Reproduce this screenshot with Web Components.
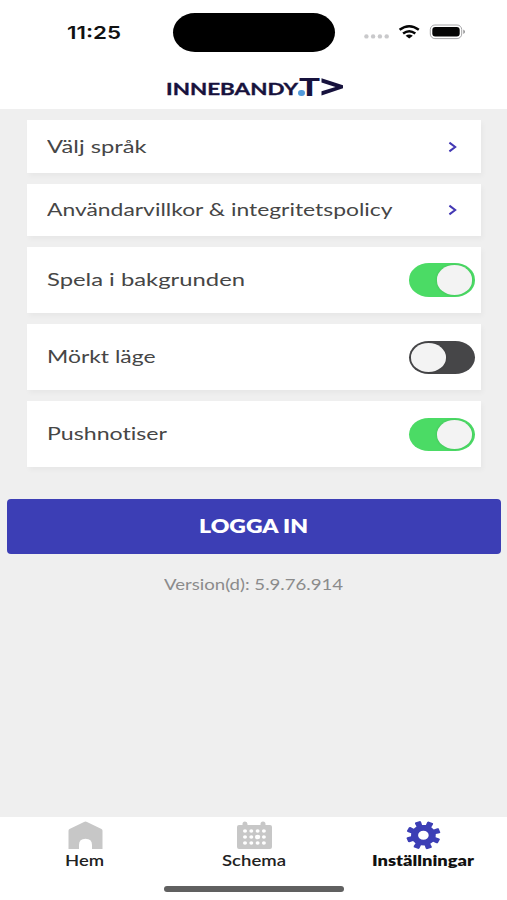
<!DOCTYPE html>
<html lang="sv">
<head>
<meta charset="utf-8">
<meta name="viewport" content="width=device-width">
<title>Inställningar</title>
<style>
html, body { margin: 0; height: 100%; background: #efefef; }
body { font-family: Lato, "Open Sans", sans-serif; font-variant-ligatures: none; }
</style>
</head>
<body>
<settings-app></settings-app>
<script>
const define = (name, html, setup) => customElements.define(name, class extends HTMLElement {
  connectedCallback() {
    if (this.shadowRoot) return;
    this.attachShadow({ mode: 'open' }).innerHTML = html;
    if (setup) setup(this, this.shadowRoot);
  }
});

/* A line of text whose glyphs are widened to fill the given width. */
define('wide-text', `<style>
  :host { display: block; flex: none; white-space: nowrap; line-height: 24px; height: 24px; }
  span { display: inline-block; transform-origin: 0 50%; }
</style><span></span>`, (host, root) => {
  const span = root.querySelector('span');
  const width = Number(host.getAttribute('width'));
  span.textContent = host.getAttribute('text');
  host.style.width = width + 'px';
  span.style.transform = `scaleX(${width / span.getBoundingClientRect().width})`;
});

define('status-bar', `<style>
  :host { display: grid; grid-template-columns: 173px 162px 1fr; height: 64px; align-items: center; box-sizing: border-box; }
  wide-text { font: 600 17.6px/24px Inter, sans-serif; color: #111; margin: 1.5px 0 0 66.5px; }
  .island { background: #000; height: 39px; border-radius: 22px / 19.5px; }
  svg { display: block; }
</style>
<wide-text text="11:25" width="54"></wide-text>
<div class="island"></div>
<svg width="172" height="64" viewBox="335 0 172 64">
  <g fill="#c9c9cb"><circle cx="366.4" cy="36.4" r="2.2"/><circle cx="373.1" cy="36.4" r="2.2"/><circle cx="379.9" cy="36.4" r="2.2"/><circle cx="386.7" cy="36.4" r="2.2"/></g>
  <g fill="none" stroke="#050505" stroke-width="2.5"><path d="M399.6 29.8Q409.2 22.6 418.8 29.8"/><path d="M403.1 33.6Q409.2 29 415.3 33.6"/></g>
  <path d="M405.6 35.8Q409.2 33.2 412.8 35.8L409.2 38.6Z" fill="#050505"/>
  <rect x="430.3" y="25" width="31.4" height="13.6" rx="4.6" fill="#fff" stroke="#a5a5a7"/>
  <rect x="432.3" y="27" width="27.4" height="9.6" rx="3" fill="#050505"/>
  <path d="M463.3 29.6Q465 30.3 465 31.8T463.3 34Z" fill="#909092"/>
</svg>`);

define('brand-logo', `<style>
  :host { display: flex; height: 45px; padding-left: 166px; align-items: flex-start; color: #17123d; }
  .name { font: 700 16.8px/24px Lato, sans-serif; -webkit-text-stroke: .35px; margin-top: 13px; }
  .t { font: 900 25.5px/30px Lato, sans-serif; height: 30px; margin: 7px 0 0 -6px; }
  .dot { width: 6.4px; height: 6px; border-radius: 50%; background: #529bdc; margin: 26px 0 0 .4px; }
  svg { margin: 13.5px 0 0 1px; }
</style>
<wide-text class="name" text="INNEBANDY" width="132"></wide-text>
<div class="dot"></div>
<wide-text class="t" text="T" width="21"></wide-text>
<svg width="24" height="18" viewBox="0 0 24 18"><path d="M.5 .3L22 7.2V10.3L.5 17.4V13.3L14.5 8.9 .5 4.4Z" fill="#17123d"/></svg>`);

define('settings-row', `<style>
  :host { display: flex; box-sizing: border-box; height: 52.5px; padding: 0 6.5px 0 20px; align-items: center; justify-content: space-between; background: #fff; color: #464646; font-size: 18px; box-shadow: 2px 3px 5px rgba(0,0,0,.035); }
  :host([tall]) { height: 66.3px; }
  wide-text { margin-bottom: 2px; }
</style><wide-text></wide-text><slot></slot>`, (host, root) => {
  const old = root.querySelector('wide-text'), t = document.createElement('wide-text');
  t.setAttribute('text', host.getAttribute('label'));
  t.setAttribute('width', host.getAttribute('label-width'));
  old.replaceWith(t);
});

define('chevron-icon', `<style>:host { display: block; margin-right: 17px; height: 12px; } svg { display: block; }</style>
<svg width="10" height="12" viewBox="0 0 10 12"><path d="M1.4 1.6L7.2 6 1.4 10.4" fill="none" stroke="#4338b4" stroke-width="2"/></svg>`);

define('toggle-switch', `<style>
  :host { display: flex; box-sizing: border-box; width: 66px; height: 33.4px; padding: 2px 2.5px 2px 2px; border-radius: 20px / 16.7px; background: #464648; }
  :host([on]) { background: #4bdb65; justify-content: flex-end; }
  i { width: 35.6px; height: 29.2px; border-radius: 50%; background: #f3f3f3; box-shadow: 0 0 3px rgba(0,0,0,.14); }
</style><i></i>`);

define('login-button', `<style>
  :host { display: flex; margin: 32px 6.5px 0 7.3px; height: 54.8px; border-radius: 4px; background: #3c3eb5; color: #fff; font-size: 18px; font-weight: 800; align-items: center; justify-content: center; box-sizing: border-box; padding-bottom: 1px; }
</style><slot></slot>`);

define('tab-item', `<style>
  :host { display: flex; flex-direction: column; align-items: center; font-size: 14.3px; color: #222; font-weight: 600; }
  :host([active]) { color: #111; font-weight: 800; }
  wide-text { margin-top: -2px; }
</style><slot></slot><wide-text></wide-text>`, (host, root) => {
  const old = root.querySelector('wide-text'), t = document.createElement('wide-text');
  t.setAttribute('text', host.getAttribute('label'));
  t.setAttribute('width', host.getAttribute('label-width'));
  old.replaceWith(t);
});

define('tab-bar', `<style>
  :host { display: flex; flex-direction: column; align-items: center; justify-content: space-between; height: 83px; box-sizing: border-box; padding: 3px 0 8.5px; background: #fff; }
  nav { display: grid; grid-template-columns: repeat(3, 1fr); width: 507px; }
  svg { display: block; }
  .home { width: 180px; height: 5.4px; border-radius: 3px; background: #606060; }
</style>
<nav>
  <tab-item label="Hem" label-width="39"><svg width="36" height="31" viewBox="0 0 36 31"><path d="M18.5 1.5Q19.2 1.5 20 2L34.5 9Q35.5 9.6 35.5 10.8V29H25V25Q25 18.8 18.5 18.8T12 25V29H1.5V10.8Q1.5 9.6 2.5 9L17 2Q17.8 1.5 18.5 1.5Z" fill="#c7c7c7"/></svg></tab-item>
  <tab-item label="Schema" label-width="64"><svg width="36" height="31" viewBox="0 0 36 31"><path d="M6.5 5V4A2.5 2.5 0 0 1 11.5 4V5H24.5V4A2.5 2.5 0 0 1 29.5 4V5H34Q36 5 36 7V27Q36 29 34 29H3Q1 29 1 27V7Q1 5 3 5Z" fill="#c7c7c7"/><g fill="#fff" id="d"></g></svg></tab-item>
  <tab-item active label="Inställningar" label-width="102"><svg width="36" height="31" viewBox="0 0 36 31"><path id="gear" fill="#3c3eb5" fill-rule="evenodd"/></svg></tab-item>
</nav>
<div class="home"></div>`, (host, root) => {
  root.querySelector('#d').innerHTML = [11, 17, 23].flatMap(y => [9, 15.3, 21.6, 27.9].map(x =>
    `<ellipse cx="${x}" cy="${y}" rx="${x === 21.6 && y === 17 ? 2.6 : 2}" ry="${x === 21.6 && y === 17 ? 2.3 : 1.8}"/>`)).join('');
  const p = (a, r) => `${(18.4 + Math.cos(a) * r * 17.3).toFixed(2)} ${(15.2 + Math.sin(a) * r * 14.4).toFixed(2)}`;
  const pts = [];
  for (let i = 0; i < 8; i++) {
    const a = i * Math.PI / 4 + 0.44;
    pts.push(p(a - .24, .72), p(a - .2, .94), p(a - .15, 1), p(a + .15, 1), p(a + .2, .94), p(a + .24, .72));
  }
  root.querySelector('#gear').setAttribute('d', `M${pts.join('L')}ZM13.1 15.2a5.3 4.5 0 1 0 10.6 0a5.3 4.5 0 1 0 -10.6 0Z`);
});

define('settings-app', `<style>
  :host { display: flex; flex-direction: column; width: 507px; height: 900px; background: #efefef; overflow: hidden; }
  header { height: 109px; background: #fff; flex: none; }
  main { flex: 1; }
  .rows { display: grid; gap: 10.8px; padding: 11.4px 25.7px 0 26.7px; }
  .version { display: flex; justify-content: center; margin-top: 17.5px; color: #8b8b8b; font-size: 15.7px; }
</style>
<header><status-bar></status-bar><brand-logo></brand-logo></header>
<main>
  <div class="rows">
    <settings-row label="Välj språk" label-width="99.5"><chevron-icon></chevron-icon></settings-row>
    <settings-row label="Användarvillkor &amp; integritetspolicy" label-width="345.5"><chevron-icon></chevron-icon></settings-row>
    <settings-row tall label="Spela i bakgrunden" label-width="198"><toggle-switch on></toggle-switch></settings-row>
    <settings-row tall label="Mörkt läge" label-width="108.5"><toggle-switch></toggle-switch></settings-row>
    <settings-row tall label="Pushnotiser" label-width="120"><toggle-switch on></toggle-switch></settings-row>
  </div>
  <login-button><wide-text text="LOGGA IN" width="109"></wide-text></login-button>
  <div class="version"><wide-text text="Version(d): 5.9.76.914" width="179"></wide-text></div>
</main>
<tab-bar></tab-bar>`);
</script>
</body>
</html>
